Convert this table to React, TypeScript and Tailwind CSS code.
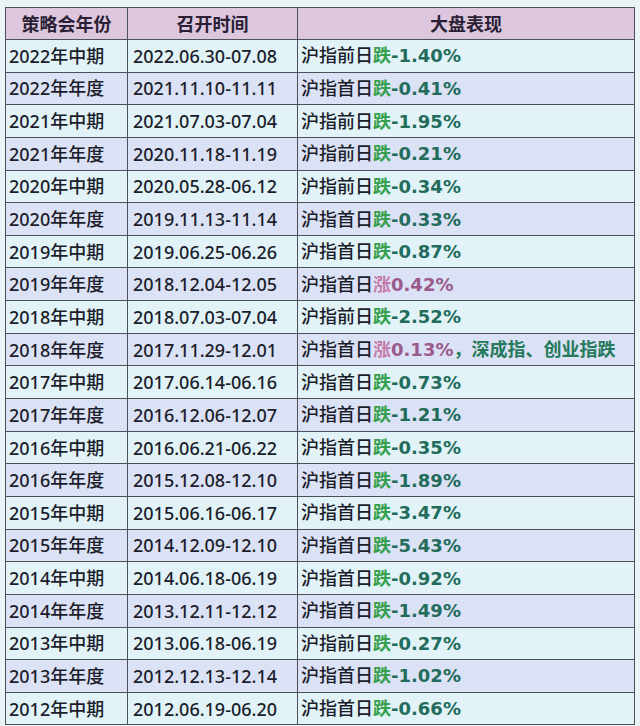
import React from "react";

type Row = {
  year: string;
  date: string;
  prefix: string;
  kind: "down" | "up";
  value: string;
  extra?: string;
};

const rows: Row[] = [
  { year: "2022年中期", date: "2022.06.30-07.08", prefix: "沪指前日", kind: "down", value: "-1.40%" },
  { year: "2022年年度", date: "2021.11.10-11.11", prefix: "沪指首日", kind: "down", value: "-0.41%" },
  { year: "2021年中期", date: "2021.07.03-07.04", prefix: "沪指前日", kind: "down", value: "-1.95%" },
  { year: "2021年年度", date: "2020.11.18-11.19", prefix: "沪指前日", kind: "down", value: "-0.21%" },
  { year: "2020年中期", date: "2020.05.28-06.12", prefix: "沪指前日", kind: "down", value: "-0.34%" },
  { year: "2020年年度", date: "2019.11.13-11.14", prefix: "沪指首日", kind: "down", value: "-0.33%" },
  { year: "2019年中期", date: "2019.06.25-06.26", prefix: "沪指首日", kind: "down", value: "-0.87%" },
  { year: "2019年年度", date: "2018.12.04-12.05", prefix: "沪指首日", kind: "up", value: "0.42%" },
  { year: "2018年中期", date: "2018.07.03-07.04", prefix: "沪指前日", kind: "down", value: "-2.52%" },
  { year: "2018年年度", date: "2017.11.29-12.01", prefix: "沪指首日", kind: "up", value: "0.13%", extra: "，深成指、创业指跌" },
  { year: "2017年中期", date: "2017.06.14-06.16", prefix: "沪指首日", kind: "down", value: "-0.73%" },
  { year: "2017年年度", date: "2016.12.06-12.07", prefix: "沪指首日", kind: "down", value: "-1.21%" },
  { year: "2016年中期", date: "2016.06.21-06.22", prefix: "沪指首日", kind: "down", value: "-0.35%" },
  { year: "2016年年度", date: "2015.12.08-12.10", prefix: "沪指首日", kind: "down", value: "-1.89%" },
  { year: "2015年中期", date: "2015.06.16-06.17", prefix: "沪指首日", kind: "down", value: "-3.47%" },
  { year: "2015年年度", date: "2014.12.09-12.10", prefix: "沪指首日", kind: "down", value: "-5.43%" },
  { year: "2014年中期", date: "2014.06.18-06.19", prefix: "沪指首日", kind: "down", value: "-0.92%" },
  { year: "2014年年度", date: "2013.12.11-12.12", prefix: "沪指首日", kind: "down", value: "-1.49%" },
  { year: "2013年中期", date: "2013.06.18-06.19", prefix: "沪指前日", kind: "down", value: "-0.27%" },
  { year: "2013年年度", date: "2012.12.13-12.14", prefix: "沪指首日", kind: "down", value: "-1.02%" },
  { year: "2012年中期", date: "2012.06.19-06.20", prefix: "沪指首日", kind: "down", value: "-0.66%" },
];

const font = { fontFamily: '"Noto Sans", "Noto Sans CJK SC", sans-serif' };
const valueFont = { fontFamily: '"DejaVu Sans", "Noto Sans CJK SC", sans-serif' };

export default function App() {
  return (
    <div className="w-[640px] h-[726px] bg-[#eaf4f6] pt-[7px] pl-[5px] overflow-hidden" style={font}>
      <table className="border-collapse table-fixed w-[629px] text-[18px] font-medium text-[#1b1d2b] leading-none">
        <colgroup>
          <col className="w-[122px]" />
          <col className="w-[170px]" />
          <col className="w-[337px]" />
        </colgroup>
        <thead>
          <tr className="h-[32px] bg-[#dcc7de]">
            <th className="border-[1.5px] border-[#4d5058] font-bold text-[#2a1f35]">策略会年份</th>
            <th className="border-[1.5px] border-[#4d5058] font-bold text-[#2a1f35]">召开时间</th>
            <th className="border-[1.5px] border-[#4d5058] font-bold text-[#2a1f35]">大盘表现</th>
          </tr>
        </thead>
        <tbody>
          {rows.map((r, i) => (
            <tr key={r.year} className={i % 2 === 0 ? "h-[32.65px] bg-[#e1f3f7]" : "h-[32.65px] bg-[#dbe2f5]"}>
              <td className="border-[1.5px] border-[#4d5058] pl-[3px] whitespace-nowrap">{r.year}</td>
              <td className="border-[1.5px] border-[#4d5058] pl-[5px] whitespace-nowrap">{r.date}</td>
              <td className="border-[1.5px] border-[#4d5058] pl-[3px] whitespace-nowrap">
                {r.prefix}
                {r.kind === "down" ? (
                  <span className="font-bold" style={valueFont}>
                    <span className="text-[#36a04e]">跌</span>
                    <span className="text-[#236c5c]">{r.value}</span>
                  </span>
                ) : (
                  <span className="font-bold" style={valueFont}>
                    <span className="text-[#c57aa8]">涨</span>
                    <span className="text-[#9a5a8c]">{r.value}</span>
                  </span>
                )}
                {r.extra && <span className="font-semibold text-[#247a5a]">{r.extra}</span>}
              </td>
            </tr>
          ))}
        </tbody>
      </table>
    </div>
  );
}
